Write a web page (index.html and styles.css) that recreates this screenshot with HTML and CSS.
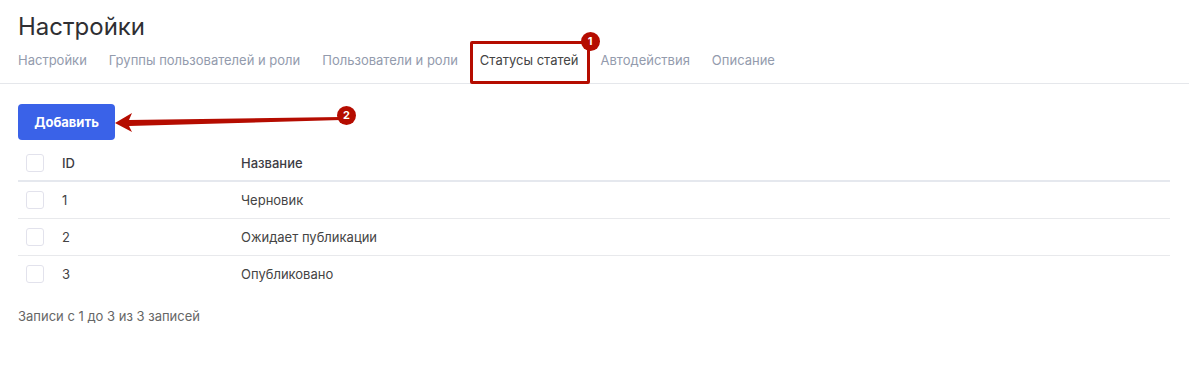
FILE: index.html
```html
<!DOCTYPE html>
<html lang="ru">
<head>
    <meta charset="UTF-8" />
    <title>Настройки</title>
    <link rel="stylesheet" href="styles.css">
</head>
<body>

    <header class="page-header">
        <h1>Настройки</h1>
        <nav class="tabs">
            <a class="tab">Настройки</a>
            <a class="tab">Группы пользователей и роли</a>
            <a class="tab">Пользователи и роли</a>
            <a class="tab active">Статусы статей
                <span class="mark-box"></span>
                <span class="badge badge-one">1</span>
            </a>
            <a class="tab">Автодействия</a>
            <a class="tab">Описание</a>
        </nav>
    </header>

    <main class="content">
        <div class="toolbar">
            <button class="btn-add">Добавить</button>
            <svg class="arrow" width="250" height="24" viewBox="0 0 250 24">
                <polygon points="0,14 17,4 14,11 226,8 226,11 14,17 17,23" fill="#b50c00" />
            </svg>
            <span class="badge badge-two">2</span>
        </div>

        <div class="table">
            <div class="row head">
                <span class="cell check"><span class="checkbox"></span></span>
                <span class="cell">ID</span>
                <span class="cell">Название</span>
            </div>
            <div class="row">
                <span class="cell check"><span class="checkbox"></span></span>
                <span class="cell">1</span>
                <span class="cell">Черновик</span>
            </div>
            <div class="row">
                <span class="cell check"><span class="checkbox"></span></span>
                <span class="cell">2</span>
                <span class="cell">Ожидает публикации</span>
            </div>
            <div class="row last">
                <span class="cell check"><span class="checkbox"></span></span>
                <span class="cell">3</span>
                <span class="cell">Опубликовано</span>
            </div>
        </div>

        <p class="summary">Записи с 1 до 3 из 3 записей</p>
    </main>

</body>
</html>
```

FILE: styles.css
```css
body {
    font-family: 'Inter', 'Roboto', sans-serif;
    margin: 0;
    padding: 0;
    background: #fff;
    color: #333;
}

.page-header {
    padding: 12px 18px 0;
    border-bottom: 1px solid #e5e7eb;
}

h1 {
    margin: 0;
    font-size: 24px;
    font-weight: 400;
    line-height: 30px;
    color: #2f2f33;
}

.tabs {
    display: flex;
    gap: 22px;
    margin-top: 5px;
}

.tab {
    position: relative;
    font-size: 13px;
    line-height: 20px;
    padding: 3px 0 13px;
    color: #939bad;
}

.tab.active {
    color: #444;
}

.mark-box {
    position: absolute;
    left: -10px;
    right: -11px;
    top: -6px;
    bottom: -1px;
    border: 3px solid #b50c00;
    border-radius: 2px;
}

.badge {
    position: absolute;
    width: 19px;
    height: 19px;
    border-radius: 50%;
    background: #b50c00;
    color: #fff;
    font-size: 11px;
    font-weight: 700;
    line-height: 19px;
    text-align: center;
}

.badge-one {
    right: -21px;
    top: -15px;
}

.content {
    padding: 20px 19px 0 18px;
}

.toolbar {
    position: relative;
    height: 36px;
}

.btn-add {
    height: 36px;
    width: 97px;
    border: none;
    border-radius: 4px;
    background: #3a62e8;
    color: #fff;
    font-family: inherit;
    font-size: 13px;
    font-weight: 700;
    cursor: pointer;
}

.arrow {
    position: absolute;
    left: 97px;
    top: 5px;
}

.badge-two {
    left: 319px;
    top: 2px;
}

.table {
    margin-top: 5px;
}

.row {
    display: grid;
    grid-template-columns: 44px 179px 1fr;
    align-items: center;
    height: 36px;
    border-bottom: 1px solid #e8e9ec;
    font-size: 13px;
    color: #444;
}

.row.head {
    height: 35px;
    border-bottom: 2px solid #e5e8ee;
    font-weight: 500;
    color: #3c3c44;
}

.row.last {
    border-bottom: none;
}

.cell.check {
    padding-left: 8px;
    display: flex;
}

.checkbox {
    width: 16px;
    height: 16px;
    border: 1px solid #e2e2ec;
    border-radius: 3px;
}

.summary {
    margin: 16px 0 0;
    font-size: 13px;
    color: #666;
}
```
